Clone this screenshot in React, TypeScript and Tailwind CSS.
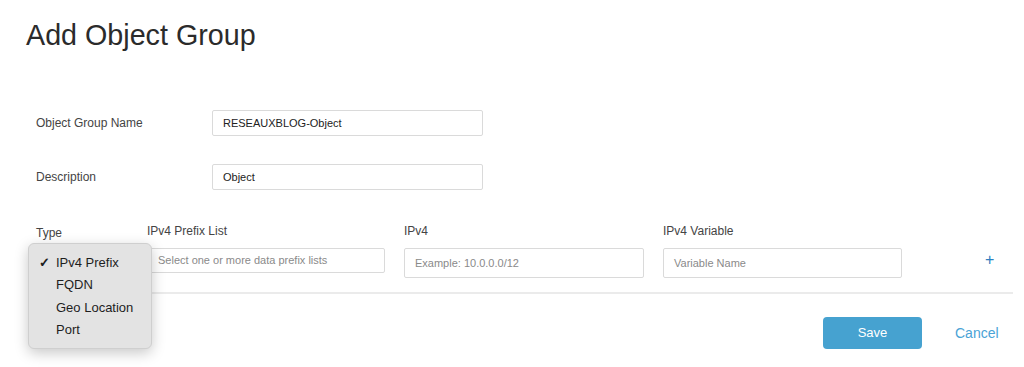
import React from "react";

const font = { fontFamily: '"Liberation Sans", Arial, sans-serif' };

function TextInput({ value, placeholder, className }: { value?: string; placeholder?: string; className?: string }) {
  return (
    <div
      className={
        "flex items-center rounded-[2px] border border-[#dadada] bg-white px-[10px] text-[11px] " + (className || "")
      }
    >
      {value ? <span className="text-[#222]">{value}</span> : <span className="text-[#8a8a8a]">{placeholder}</span>}
    </div>
  );
}

export default function App() {
  const options = ["IPv4 Prefix", "FQDN", "Geo Location", "Port"];

  return (
    <div className="relative h-[367px] w-[1024px] overflow-hidden bg-white text-[#444]" style={font}>
      <h1 className="pl-[26px] pt-[21px] text-[28.7px] font-normal leading-[28px] text-[#2b2b2b]">Add Object Group</h1>

      <div className="mt-[61px] flex flex-col gap-[28px] pl-[36px]">
        <div className="flex items-center">
          <div className="w-[176px] text-[12px]">Object Group Name</div>
          <TextInput value="RESEAUXBLOG-Object" className="h-[26px] w-[271px]" />
        </div>
        <div className="flex items-center">
          <div className="w-[176px] text-[12px]">Description</div>
          <TextInput value="Object" className="h-[26px] w-[271px]" />
        </div>
      </div>

      <div className="mt-[34px] flex pl-[36px] text-[12px]">
        <div className="w-[111px]">Type</div>
        <div className="w-[238px]">
          <div className="h-[14px] leading-[14px]">IPv4 Prefix List</div>
          <TextInput placeholder="Select one or more data prefix lists" className="mt-[10px] h-[25px] w-[238px] text-[11.5px]" />
        </div>
        <div className="ml-[19px] w-[240px]">
          <div className="h-[14px] leading-[14px]">IPv4</div>
          <TextInput placeholder="Example: 10.0.0.0/12" className="mt-[10px] h-[30px] w-[240px] text-[11.5px]" />
        </div>
        <div className="ml-[19px] w-[239px]">
          <div className="h-[14px] leading-[14px]">IPv4 Variable</div>
          <TextInput placeholder="Variable Name" className="mt-[10px] h-[30px] w-[239px] text-[11.5px]" />
        </div>
        <div className="ml-[83px] mt-[26px] text-[16px] leading-[20px] text-[#2d7fc0]">+</div>
      </div>

      <div className="ml-[36px] mt-[14px] h-[2px] w-[977px] bg-[#ebebeb]" />

      <div className="mt-[23px] flex items-center pl-[823px]">
        <button className="h-[32px] w-[99px] rounded-[4px] bg-[#46a2d0] text-[13px] text-white">Save</button>
        <button className="ml-[33px] text-[14px] text-[#4aa3d6]">Cancel</button>
      </div>

      <div className="absolute left-[28px] top-[243px] w-[124px] rounded-[6px] border border-[#cfcfcf] bg-[#e3e3e3] py-[7px] shadow-[0_4px_14px_rgba(0,0,0,0.22)]">
        {options.map((o, i) => (
          <div key={o} className="flex h-[22.5px] items-center text-[13px] text-[#1e1e1e]">
            <span className="w-[27px] pl-[10px] text-[13px] font-bold">{i === 0 ? "✓" : ""}</span>
            <span>{o}</span>
          </div>
        ))}
      </div>
    </div>
  );
}
